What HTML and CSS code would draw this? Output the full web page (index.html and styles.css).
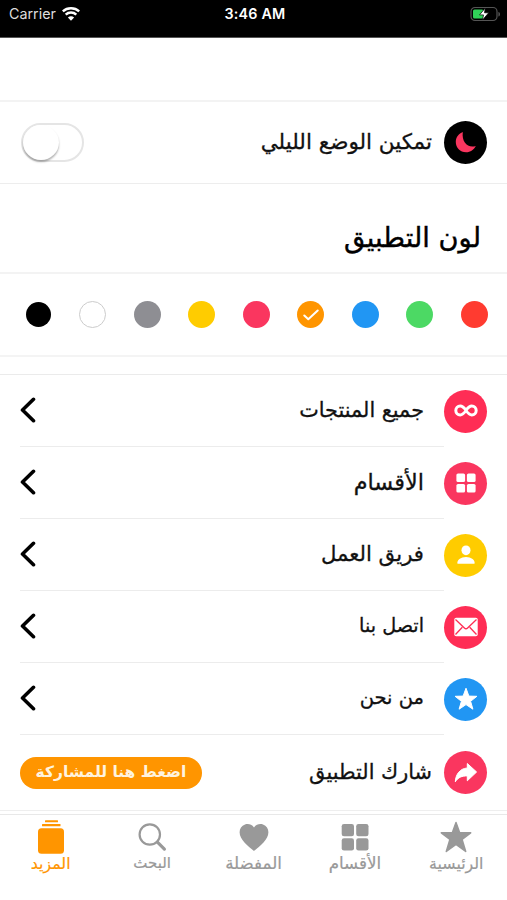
FILE: index.html
```html
<!DOCTYPE html>
<html lang="ar" dir="rtl">
<head>
  <meta charset="UTF-8">
  <meta name="viewport" content="width=device-width, initial-scale=1.0">
  <title>المزيد</title>
  <link rel="stylesheet" href="styles.css">
</head>
<body>

<header class="status-bar" dir="ltr">
  <div class="carrier">
    <span>Carrier</span>
    <svg width="18" height="14" viewBox="0 0 18 14">
      <path d="M.8 4.400C5.300.2 12.700.2 17.200 4.400M3.700 7.600c3-2.800 7.600-2.800 10.600 0" fill="none" stroke="#fff" stroke-width="2.500"/>
      <path d="M9 13.700 5.900 10.500c1.800-1.600 4.400-1.600 6.200 0z" fill="#fff"/>
    </svg>
  </div>
  <div class="time">3:46 AM</div>
  <svg class="battery" width="31" height="16" viewBox="0 0 31 16">
    <rect x="1" y="1.500" width="26" height="13" rx="4" fill="none" stroke="#555" stroke-width="1.200"/>
    <path d="M28.500 6v4.500c1.800-.6 1.800-3.900 0-4.500z" fill="#666"/>
    <rect x="3" y="3.500" width="10.500" height="9" rx="1.500" fill="#30d158"/>
    <path d="M15.300 2 9.500 8.900h4L12.500 14l6.200-7.200h-4.200z" fill="#fff" stroke="#000" stroke-width=".7"/>
  </svg>
</header>

<div class="nav-bar"></div>

<main>
  <div class="row night">
    <span class="icon black">
      <svg width="24" height="24" viewBox="0 0 24 24"><path d="M8.800 1C5 2.500 1.800 6 1.800 11.100c0 5.500 4.300 10.200 10.300 10.200 4.300 0 8-2.700 9.700-6.300-8 2.400-14.300-3.800-13-14z" fill="#fa365f"/></svg>
    </span>
    <span class="label">تمكين الوضع الليلي</span>
    <span class="switch"></span>
  </div>

  <h2>لون التطبيق</h2>

  <div class="colors">
    <span class="dot red"></span>
    <span class="dot green"></span>
    <span class="dot blue"></span>
    <span class="dot orange">
      <svg width="16" height="12" viewBox="0 0 16 12"><path d="M1.300 6.500 5.300 10.300 14.700 1.500" fill="none" stroke="#fff" stroke-width="2" stroke-linecap="round" stroke-linejoin="round"/></svg>
    </span>
    <span class="dot pink"></span>
    <span class="dot yellow"></span>
    <span class="dot gray"></span>
    <span class="dot white"></span>
    <span class="dot black small"></span>
  </div>

  <section class="menu">
    <div class="row">
      <span class="icon pink">
        <svg width="24" height="14" viewBox="0 0 24 14"><path d="M12 6.500C9.800 3.300 8.500 2.100 6.200 2.100a4.400 4.400 0 0 0 0 8.800C8.500 10.900 9.800 9.700 12 6.500s3.500-4.400 5.800-4.400a4.400 4.400 0 0 1 0 8.800C15.500 10.900 14.200 9.700 12 6.500z" fill="none" stroke="#fff" stroke-width="3"/></svg>
      </span>
      <div class="item"><span class="label products">جميع المنتجات</span><svg class="arrow" width="16" height="26" viewBox="0 0 16 26"><path d="M13.500 2.300 2.500 13l11 10.700"/></svg></div>
    </div>
    <div class="row">
      <span class="icon rose">
        <svg width="20" height="20" viewBox="0 0 20 20" fill="#fff"><rect x=".4" y=".4" width="8.700" height="8.700" rx="1.600"/><rect x="10.900" y=".4" width="8.700" height="8.700" rx="1.600"/><rect x=".4" y="10.900" width="8.700" height="8.700" rx="1.600"/><rect x="10.900" y="10.900" width="8.700" height="8.700" rx="1.600"/></svg>
      </span>
      <div class="item"><span class="label sections">الأقسام</span><svg class="arrow" width="16" height="26" viewBox="0 0 16 26"><path d="M13.500 2.300 2.500 13l11 10.700"/></svg></div>
    </div>
    <div class="row">
      <span class="icon yellow">
        <svg width="20" height="20" viewBox="0 0 20 20" fill="#fff"><ellipse cx="10" cy="5.300" rx="4.500" ry="4.900"/><path d="M1.500 18.700C.4 15.300 5 12 10 12s9.600 3.300 8.500 6.700z"/></svg>
      </span>
      <div class="item"><span class="label team">فريق العمل</span><svg class="arrow" width="16" height="26" viewBox="0 0 16 26"><path d="M13.500 2.300 2.500 13l11 10.700"/></svg></div>
    </div>
    <div class="row">
      <span class="icon pink">
        <svg width="24" height="20" viewBox="0 0 24 20"><rect x=".3" y=".8" width="23.400" height="18.400" rx="1.800" fill="#fff"/><path d="M1.500 2.500 10.400 11q1.600 1.500 3.200 0l8.900-8.500M1.500 17.500l6.800-7.200M22.500 17.500l-6.800-7.200" fill="none" stroke="#ff2d55" stroke-width="1.300"/></svg>
      </span>
      <div class="item"><span class="label contact">اتصل بنا</span><svg class="arrow" width="16" height="26" viewBox="0 0 16 26"><path d="M13.500 2.300 2.500 13l11 10.700"/></svg></div>
    </div>
    <div class="row">
      <span class="icon blue">
        <svg width="24" height="24" viewBox="0 0 24 24"><path d="M12 1.200l2.900 7.900 8 .2-6.300 5 2.300 7.900-6.900-4.600-6.900 4.600 2.300-7.900-6.300-5 8-.2z" fill="#fff" stroke="#fff" stroke-linejoin="round"/></svg>
      </span>
      <div class="item"><span class="label about">من نحن</span><svg class="arrow" width="16" height="26" viewBox="0 0 16 26"><path d="M13.500 2.300 2.500 13l11 10.700"/></svg></div>
    </div>
    <div class="row share">
      <span class="icon rose">
        <svg width="24" height="22" viewBox="0 0 24 22"><path d="M13.300 1.500 22.600 10l-9.300 8.800v-4.900c-5.300 0-9 1.200-12 5.900.4-7.400 4.500-13.300 12-13.800z" fill="#fff" stroke="#fff" stroke-linejoin="round"/></svg>
      </span>
      <span class="label">شارك التطبيق</span>
      <button type="button" class="share-btn">اضغط هنا للمشاركة</button>
    </div>
  </section>
</main>

<nav class="tab-bar">
  <a class="tab home">
    <svg width="34" height="34" viewBox="0 0 34 34"><path d="M17 2.500l3.700 10.300h11l-8.600 6.700 3.600 12L17 24.400l-9.700 7.100 3.600-12-8.600-6.700h11z" fill="#999" stroke="#999" stroke-width="1.500" stroke-linejoin="round"/></svg>
    <span>الرئيسية</span>
  </a>
  <a class="tab wide">
    <svg width="34" height="34" viewBox="0 0 34 34" fill="#999"><rect x="3.700" y="4" width="12.300" height="12.300" rx="2.300"/><rect x="18.200" y="4" width="12.300" height="12.300" rx="2.300"/><rect x="3.700" y="18.200" width="12.300" height="12.300" rx="2.300"/><rect x="18.200" y="18.200" width="12.300" height="12.300" rx="2.300"/></svg>
    <span>الأقسام</span>
  </a>
  <a class="tab wide">
    <svg width="34" height="34" viewBox="0 0 34 34"><path d="M17 7.400C14.500 3.800 10.700 3.400 8 4.400 4.500 5.700 2.600 8.800 2.600 12.200c0 7.300 8.200 13.700 14.400 18.800 6.200-5.100 14.400-11.500 14.400-18.800 0-3.400-1.900-6.500-5.400-7.800-2.700-1-6.500-.6-9 3z" fill="#999"/></svg>
    <span>المفضلة</span>
  </a>
  <a class="tab">
    <svg width="34" height="34" viewBox="0 0 34 34"><g fill="none" stroke="#999"><circle cx="14.800" cy="14.500" r="10.200" stroke-width="2.200"/><path d="M22.400 22.100l7 7" stroke-width="3.200" stroke-linecap="round"/></g></svg>
    <span>البحث</span>
  </a>
  <a class="tab home active">
    <svg width="34" height="34" viewBox="0 0 34 34" fill="#ff9500"><rect x="11" y=".2" width="13" height="2" rx=".5"/><rect x="8" y="4" width="18.500" height="2.200" rx=".5"/><rect x="4" y="8.300" width="26" height="25.500" rx="3.500"/></svg>
    <span>المزيد</span>
  </a>
</nav>

</body>
</html>
```
FILE: styles.css
```css
* { box-sizing: border-box; }
body { margin: 0; height: 900px; overflow: hidden; background: #fff; color: #111; font-family: "DejaVu Sans", sans-serif; }
svg { display: block; flex: none; }
.status-bar {
  display: grid;
  grid-template-columns: 1fr auto 1fr;
  align-items: center;
  height: 38px;
  padding: 0 6px 10px 9px;
  background: #000;
  border-bottom: 1px solid #555;
  color: #fff;
  font-family: Inter, sans-serif;
}
.carrier { display: flex; align-items: center; gap: 6px; font-size: 14.3px; color: #ddd; }
.time { font-size: 14.3px; font-weight: 600; letter-spacing: 0.2px; }
.battery { justify-self: end; }
.nav-bar { height: 64px; border-bottom: 2px solid #f3f3f3; }

.row { display: flex; align-items: center; padding: 0 20px; }
.icon {
  display: flex;
  flex: none;
  align-items: center;
  justify-content: center;
  width: 43px;
  height: 43px;
  border-radius: 50%;
}
.label {
  padding-bottom: 1px;
  font-size: 20.8px;
  line-height: 30px;
  white-space: nowrap;
  -webkit-text-stroke: 0.3px #111;
}
.products { font-size: 20.8px; }
.sections { font-size: 22.4px; }
.team { font-size: 21.2px; }
.contact { font-size: 19.2px; }
.about { font-size: 19.5px; }
.night { height: 82px; border-bottom: 1px solid #ededed; }
.night .label, .share .label { margin-right: 12px; }
.night .label { font-size: 21.5px; }
.switch {
  width: 63px;
  height: 39px;
  margin-right: auto;
  margin-left: 1px;
  border: 2px solid #e5e5e5;
  border-radius: 20px;
}
.switch::before {
  content: "";
  display: block;
  width: 36px;
  height: 35px;
  margin-right: auto;
  border-radius: 50%;
  background: #fff;
  box-shadow: 0 2px 2px rgba(0,0,0,0.3);
}

h2 {
  height: 90px;
  margin: 0;
  padding: 35px 26px 0;
  border-bottom: 2px solid #f3f3f3;
  color: #000;
  font-size: 27.3px;
  line-height: 38px;
  font-weight: normal;
  -webkit-text-stroke: 0.4px #000;
}
.colors { display: flex; align-items: center; justify-content: space-between; height: 83px; padding: 0 19.5px 0 25px; border-bottom: 2px solid #f4f4f4; }
.dot { display: flex; align-items: center; justify-content: center; width: 27px; height: 27px; border-radius: 50%; }
.dot.small { width: 25px; height: 25px; margin: 0 1px; }
.black { background: #000; }
.red { background: #ff3b30; }
.green { background: #4cd964; }
.blue { background: #2196f3; }
.orange { background: #ff9500; }
.pink { background: #ff2d55; }
.rose, .dot.pink { background: #fa365f; }
.yellow { background: #ffcc00; }
.gray { background: #8e8e93; }
.white { background: #fff; border: 1px solid #ccc; }

.menu { margin-top: 17px; border-top: 1px solid #ebebeb; }
.menu .row { height: 72px; }
.item {
  display: flex;
  flex: 1;
  align-items: center;
  justify-content: space-between;
  height: 72px;
  padding-right: 20px;
  padding-bottom: 1px;
  border-bottom: 1px solid #ececec;
}
.arrow { fill: none; stroke: #000; stroke-width: 3.6; stroke-linecap: round; stroke-linejoin: round; }
.menu .share { height: 76px; border-bottom: 1px solid #eee; }
.share-btn {
  width: 182px;
  height: 32px;
  margin-right: auto;
  padding: 0 0 1px;
  border: none;
  border-radius: 16px;
  background: #ff9500;
  color: #fff3df;
  font: bold 15.5px "DejaVu Sans", sans-serif;
}

.tab-bar { display: grid; grid-template-columns: repeat(5, 1fr); height: 87px; margin-top: 3px; border-top: 1px solid #e8e8e8; }
.tab { display: flex; flex-direction: column; align-items: center; padding-top: 5px; color: #999; font-size: 15px; line-height: 19px; white-space: nowrap; -webkit-text-stroke: 0.2px; }
.tab.home { font-size: 15.8px; }
.tab.wide { font-size: 16.7px; }
.tab.active { color: #ff9500; }
```
